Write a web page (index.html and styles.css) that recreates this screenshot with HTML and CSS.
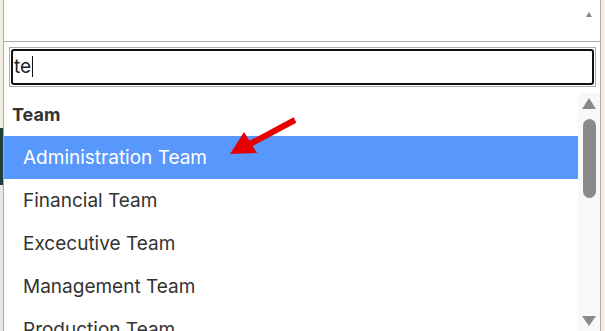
FILE: index.html
```html
<!DOCTYPE html>
<html lang="en">
<head>
    <meta charset="UTF-8">
    <meta name="viewport" content="width=device-width, initial-scale=1.0">
    <title>Team select</title>
    <link rel="stylesheet" href="styles.css">
</head>
<body>
    <div class="page">
        <div class="side-strip">
            <div class="strip-top"></div>
            <div class="strip-dark"></div>
            <div class="strip-light"></div>
        </div>

        <div class="select-panel">
            <div class="select-box">
                <span class="select-caret"></span>
            </div>

            <div class="dropdown">
                <div class="search-wrap">
                    <div class="search-field">te<span class="cursor"></span></div>
                </div>

                <div class="results">
                    <ul class="results-list">
                        <li class="group-label">Team</li>
                        <li class="option highlighted">Administration Team</li>
                        <li class="option">Financial Team</li>
                        <li class="option">Excecutive Team</li>
                        <li class="option">Management Team</li>
                        <li class="option">Production Team</li>
                    </ul>
                    <div class="scrollbar">
                        <span class="scroll-up"></span>
                        <span class="scroll-thumb"></span>
                        <span class="scroll-down"></span>
                    </div>
                </div>
            </div>

            <!-- annotation arrow -->
            <svg class="pointer-arrow" width="140" height="80" viewBox="0 0 140 80">
                <path d="M115 20 L68 45" stroke="#e60000" stroke-width="6" fill="none"/>
                <polygon points="50,54 64,32 77,53" fill="#e60000"/>
            </svg>
        </div>

        <div class="side-strip right"></div>
    </div>
</body>
</html>
```

FILE: styles.css
```css
body {
    font-family: Inter, 'Noto Sans', sans-serif;
    margin: 0;
    padding: 0;
    background-color: #f3ede3;
    color: #333;
    overflow: hidden;
}
.page {
    display: flex;
    width: 605px;
    height: 331px;
}
.side-strip {
    width: 3px;
    display: flex;
    flex-direction: column;
}
.side-strip.right {
    width: 4px;
}
.strip-top {
    height: 128px;
    background-color: #f3ede3;
}
.strip-dark {
    height: 57px;
    background-color: #1f3f3c;
}
.strip-light {
    flex: 1;
    background-color: #e6e6e6;
}
.select-panel {
    position: relative;
    flex: 1;
    background-color: #fff;
    border-left: 1px solid #aaa;
    border-right: 1px solid #aaa;
    display: flex;
    flex-direction: column;
    min-width: 0;
}
.select-box {
    height: 42px;
    border-bottom: 1px solid #aaa;
    display: flex;
    justify-content: flex-end;
    padding: 12px 8px 0 0;
    box-sizing: border-box;
    flex-shrink: 0;
}
.select-caret {
    width: 0;
    height: 0;
    border-left: 3px solid transparent;
    border-right: 3px solid transparent;
    border-bottom: 5px solid #888;
}
.dropdown {
    flex: 1;
    display: flex;
    flex-direction: column;
    min-height: 0;
}
.search-wrap {
    padding: 5px 4px 0 5px;
}
.search-field {
    border: 1px solid #aaa;
    height: 40px;
    box-sizing: border-box;
    position: relative;
    font-size: 19px;
    line-height: 38px;
    padding-left: 4px;
    color: #1c1c28;
}
.search-field::before {
    content: "";
    position: absolute;
    top: 1px;
    left: 1px;
    right: 1px;
    bottom: 1px;
    border: 2px solid #111;
    border-radius: 3px;
}
.cursor {
    display: inline-block;
    width: 1px;
    height: 21px;
    margin-left: 1px;
    background-color: #111;
    vertical-align: -4px;
}
.results {
    flex: 1;
    display: flex;
    min-height: 0;
    margin-top: 6px;
}
.results-list {
    list-style: none;
    margin: 0;
    padding: 0;
    flex: 1;
    overflow: hidden;
}
.group-label {
    font-weight: 700;
    font-size: 18px;
    height: 43px;
    line-height: 43px;
    padding-left: 8px;
    color: #333;
}
.option {
    font-size: 19px;
    height: 43px;
    line-height: 43px;
    padding-left: 19px;
    color: #333;
    white-space: nowrap;
}
.option.highlighted {
    background-color: #5897fb;
    color: #fff;
}
.scrollbar {
    width: 22px;
    background-color: #f8f8f8;
    display: flex;
    flex-direction: column;
    align-items: center;
    padding: 5px 0 5px;
    box-sizing: border-box;
}
.scroll-up {
    width: 0;
    height: 0;
    border-left: 7px solid transparent;
    border-right: 7px solid transparent;
    border-bottom: 11px solid #8a8a8a;
}
.scroll-thumb {
    width: 13px;
    height: 79px;
    margin-top: 10px;
    border-radius: 7px;
    background-color: #8a8a8a;
}
.scroll-down {
    margin-top: auto;
    width: 0;
    height: 0;
    border-left: 7px solid transparent;
    border-right: 7px solid transparent;
    border-top: 10px solid #8a8a8a;
}
.pointer-arrow {
    position: absolute;
    left: 176px;
    top: 100px;
}
```
